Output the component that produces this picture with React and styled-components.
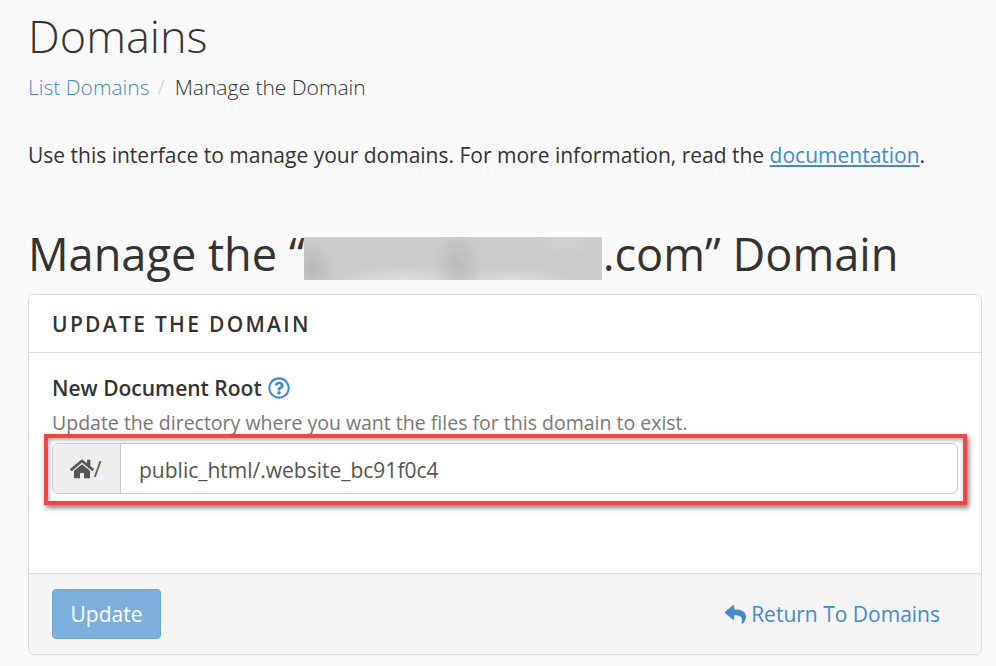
import { createGlobalStyle, styled } from "styled-components"
import { FaHome, FaRegQuestionCircle, FaReply } from "react-icons/fa"

const GlobalStyle = createGlobalStyle`
    html, body {
        margin: 0;
        height: 100%;
        background: #fafafa;
    }
    body {
        font-family: "Open Sans", "Liberation Sans", sans-serif;
        color: #333;
        overflow: hidden;
    }
`

const Page = styled.div`
    width: 996px;
    height: 666px;
    padding: 0 14px 0 28px;
    box-sizing: border-box;
    overflow: hidden;
`

const Title = styled.h1`
    margin: 0;
    padding-top: 10px;
    font-size: 45px;
    line-height: 52px;
    font-weight: 300;
`

const Breadcrumb = styled.div`
    margin-top: 8px;
    display: flex;
    font-size: 21px;
    line-height: 34px;
    font-weight: 300;
`

const Crumb = styled.a`
    color: #428bca;
`

const Divider = styled.span`
    color: #ccc;
    padding: 0 10px 0 8px;
`

const Intro = styled.p`
    margin: 34px 0 0;
    font-size: 21px;
    line-height: 34px;

    a {
        color: #428bca;
        text-decoration: underline;
    }
`

const Heading = styled.h2`
    margin: 51px 0 0;
    font-size: 45.15px;
    line-height: 62px;
    font-weight: 400;
    white-space: nowrap;
    display: flex;
`

const Redacted = styled.span`
    display: block;
    width: 298px;
    height: 43px;
    margin: 14px 1px 0 -1px;
    background:
        radial-gradient(ellipse 22px 26px at 8px 32px, #b8b8b8, transparent),
        radial-gradient(ellipse 24px 30px at 154px 26px, #bababa, transparent),
        radial-gradient(ellipse 70px 16px at 100px 44px, #e0e0e0, transparent),
        radial-gradient(ellipse 60px 14px at 210px 44px, #dedede, transparent),
        radial-gradient(ellipse 30px 12px at 262px 6px, #d2d2d2, transparent),
        #cbcbcb;
`

const Card = styled.section`
    margin-top: 9px;
    height: 361px;
    box-sizing: border-box;
    display: flex;
    flex-direction: column;
    background: #fff;
    border: 1px solid #ddd;
    border-radius: 6px;
    box-shadow: 0 1px 1px rgba(0, 0, 0, .05);
`

const CardHeader = styled.header`
    height: 58px;
    box-sizing: border-box;
    padding: 0 23px;
    display: flex;
    align-items: center;
    border-bottom: 1px solid #ddd;
    font-size: 21px;
    font-weight: 600;
    letter-spacing: 2.3px;
    text-transform: uppercase;
`

const CardBody = styled.div`
    flex: 1;
    padding: 18px 23px 0;
`

const Label = styled.label`
    display: flex;
    align-items: center;
    gap: 6px;
    font-size: 21px;
    line-height: 34px;
    font-weight: 600;

    svg {
        color: #428bca;
        font-size: 22px;
    }
`

const Help = styled.div`
    margin-top: 1px;
    font-size: 19.5px;
    line-height: 34px;
    color: #777;
`

const InputGroup = styled.div`
    position: relative;
    margin-top: 3px;
    height: 51px;
    box-sizing: border-box;
    display: flex;
    border: 1px solid #ccc;
    border-radius: 6px;
`

const Addon = styled.span`
    width: 68px;
    padding-right: 2px;
    box-sizing: border-box;
    display: flex;
    align-items: center;
    justify-content: center;
    background: #eee;
    border-right: 1px solid #ccc;
    border-radius: 5px 0 0 5px;
    color: #555;
    font-size: 21px;

    svg {
        font-size: 24px;
    }
`

const Value = styled.span`
    flex: 1;
    padding: 2px 0 0 18px;
    display: flex;
    align-items: center;
    font-size: 21px;
    color: #555;
`

const Highlight = styled.div`
    position: absolute;
    inset: -10px -10px -12px -9px;
    border: 4px solid #f44444;
    box-shadow: 2px 3px 5px rgba(0, 0, 0, .5), inset 1px 2px 4px rgba(0, 0, 0, .35);
    pointer-events: none;
`

const CardFooter = styled.footer`
    height: 81px;
    box-sizing: border-box;
    padding: 0 41px 0 23px;
    display: flex;
    align-items: center;
    justify-content: space-between;
    background: #f5f5f5;
    border-top: 1px solid #ddd;
    border-radius: 0 0 6px 6px;
`

const Button = styled.button`
    width: 109px;
    height: 50px;
    padding: 0;
    background: #7bafde;
    border: 1px solid #6fa3d3;
    border-radius: 4px;
    color: #fff;
    font-family: inherit;
    font-size: 21px;
`

const ReturnLink = styled.a`
    display: flex;
    align-items: center;
    gap: 5px;
    color: #428bca;
    font-size: 21px;
`

const App = () => {
  return (
    <Page>
      <GlobalStyle />
      <Title>Domains</Title>
      <Breadcrumb>
        <Crumb>List Domains</Crumb>
        <Divider>/</Divider>
        <span>Manage the Domain</span>
      </Breadcrumb>
      <Intro>
        Use this interface to manage your domains. For more information, read the <a>documentation</a>.
      </Intro>
      <Heading>
        Manage the “<Redacted />.com” Domain
      </Heading>
      <Card>
        <CardHeader>Update the Domain</CardHeader>
        <CardBody>
          <Label>
            New Document Root <FaRegQuestionCircle />
          </Label>
          <Help>Update the directory where you want the files for this domain to exist.</Help>
          <InputGroup>
            <Addon><FaHome />/</Addon>
            <Value>public_html/.website_bc91f0c4</Value>
            <Highlight />
          </InputGroup>
        </CardBody>
        <CardFooter>
          <Button>Update</Button>
          <ReturnLink><FaReply /> Return To Domains</ReturnLink>
        </CardFooter>
      </Card>
    </Page>
  )
}

export default App
